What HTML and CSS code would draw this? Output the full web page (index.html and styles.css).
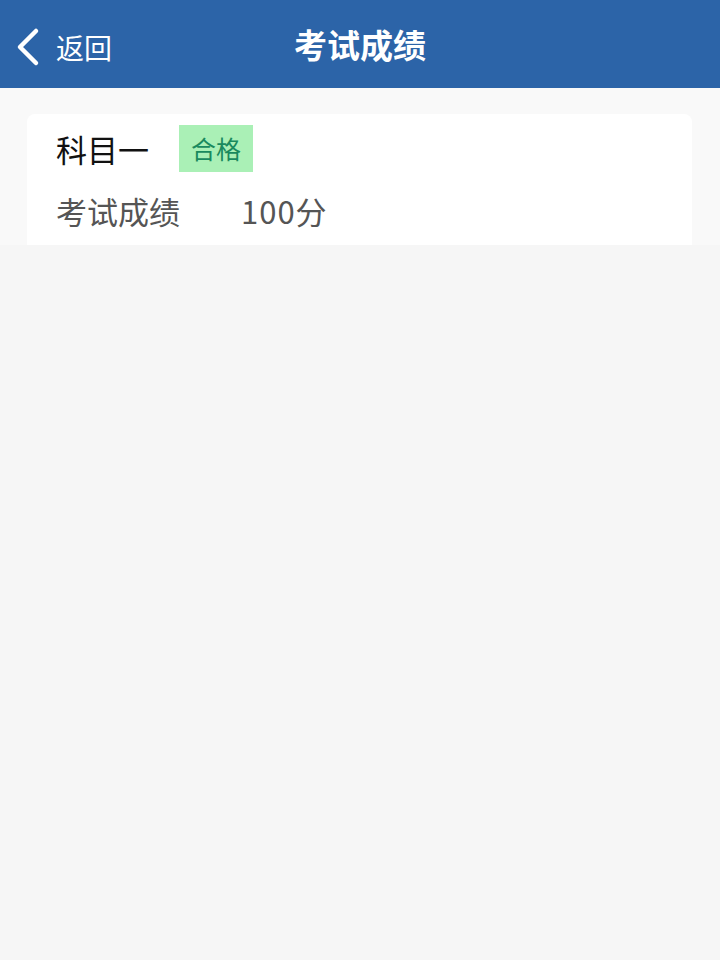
FILE: index.html
```html
<!DOCTYPE html>
<html lang="zh-CN">
<head>
    <meta charset="UTF-8">
    <meta name="viewport" content="width=device-width, initial-scale=1.0">
    <title>考试成绩</title>
    <link rel="stylesheet" href="styles.css">
</head>
<body>
    <header class="navbar">
        <a class="back" href="#">
            <svg class="back-icon" width="26" height="40" viewBox="0 0 26 40">
                <polyline points="20,4 4,20 20,36" fill="none" stroke="#ffffff" stroke-width="4.5" stroke-linecap="round" stroke-linejoin="round"/>
            </svg>
            <span>返回</span>
        </a>
        <h1 class="title">考试成绩</h1>
    </header>

    <main class="content">
        <div class="card">
            <div class="row">
                <span class="subject">科目一</span>
                <span class="badge">合格</span>
            </div>
            <div class="row">
                <span class="label">考试成绩</span>
                <span class="score">100分</span>
            </div>
        </div>
    </main>
</body>
</html>
```

FILE: styles.css
```css
body {
    margin: 0;
    padding: 0;
    font-family: "Noto Sans CJK SC", "Noto Sans", sans-serif;
    background-color: #f6f6f6;
}

.navbar {
    position: relative;
    height: 88px;
    background-color: #2c64a8;
    display: flex;
    align-items: center;
    justify-content: center;
}

.back {
    position: absolute;
    left: 16px;
    top: 27px;
    display: flex;
    align-items: center;
    gap: 14px;
    color: #ffffff;
    text-decoration: none;
    font-size: 28px;
    line-height: 40px;
}

.title {
    margin: 0;
    color: #ffffff;
    font-size: 33px;
    font-weight: bold;
    line-height: 40px;
}

.content {
    background-color: #f9f9f9;
    padding: 26px 28px 0 27px;
}

.card {
    background-color: #ffffff;
    border-radius: 8px 8px 0 0;
    padding: 11px 29px 12px;
    display: flex;
    flex-direction: column;
    gap: 16px;
}

.row {
    display: flex;
    align-items: center;
}

.subject {
    font-size: 31px;
    color: #111111;
    width: 123px;
}

.badge {
    background-color: #aaf0b6;
    color: #1a8a5e;
    font-size: 25px;
    line-height: 47px;
    padding: 0 12px;
}

.label {
    font-size: 31px;
    color: #555555;
    width: 185px;
}

.score {
    font-size: 31px;
    color: #555555;
    letter-spacing: 1px;
}
```
